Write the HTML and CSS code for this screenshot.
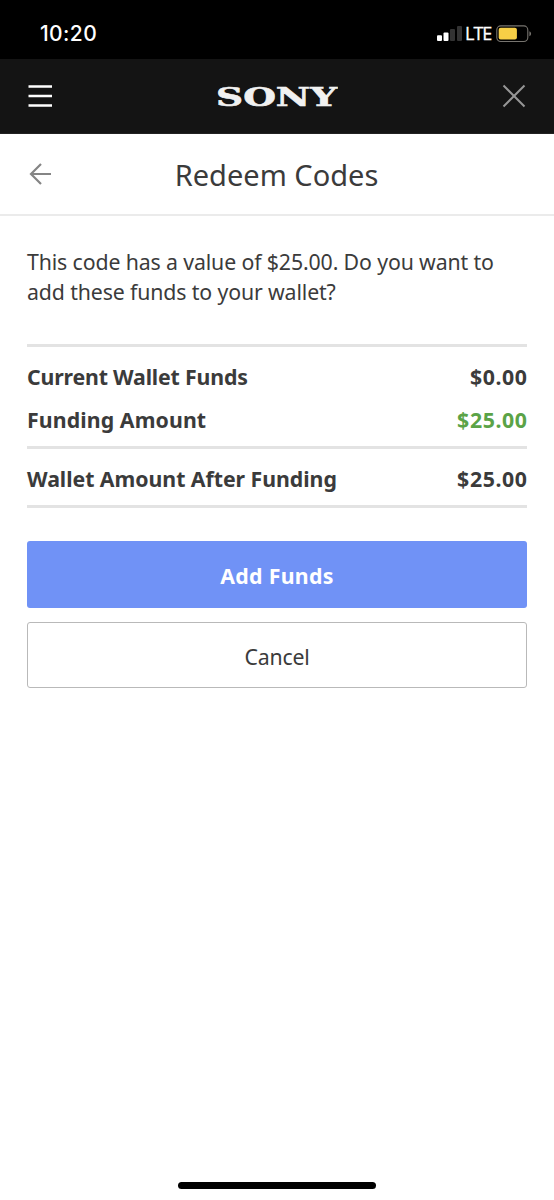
FILE: index.html
```html
<!DOCTYPE html>
<html lang="en">
<head>
<meta charset="utf-8">
<title>Redeem Codes</title>
<link rel="stylesheet" href="styles.css">
</head>
<body>
<div class="screen">
  <div class="status-bar">
    <span class="time">10:20</span>
    <div class="status-icons">
      <svg class="signal" width="26" height="16" viewBox="0 0 26 16">
        <rect x="0" y="9.3" width="5" height="5.7" rx="1" fill="#fff"/>
        <rect x="6.5" y="6.5" width="5" height="8.5" rx="1" fill="#fff"/>
        <rect x="13" y="3" width="5" height="12" rx="1" fill="#333"/>
        <rect x="20" y="0" width="5" height="15" rx="1" fill="#333"/>
      </svg>
      <span class="network">LTE</span>
      <svg class="battery" width="36" height="18" viewBox="0 0 36 18">
        <rect x=".8" y=".9" width="31" height="15.6" rx="4" fill="none" stroke="#77746f" stroke-width="1.1"/>
        <rect x="2.7" y="2.8" width="18.2" height="11.8" rx="2" fill="#f7cf46"/>
        <path d="M33.4 6.2c2.2.7 2.2 4.3 0 5z" fill="#77746f"/>
      </svg>
    </div>
  </div>
  <header class="brand-bar">
    <svg class="menu" width="24" height="24" viewBox="0 0 24 24"><path d="M.5 2.5H24M.5 12H24M.5 21.5H24" stroke="#fff" stroke-width="2.5"/></svg>
    <svg class="logo" width="122" height="30" viewBox="0 0 122 30"><text class="logo-text" x="0" y="24.5" textLength="121" lengthAdjust="spacingAndGlyphs">SONY</text></svg>
    <svg class="close" width="24" height="24" viewBox="0 0 24 24"><path d="M1.5 1.5L22.5 22.5M22.5 1.5L1.5 22.5" stroke="#969696" stroke-width="2"/></svg>
  </header>
  <div class="title-bar">
    <svg class="back" width="24" height="24" viewBox="0 0 24 24"><path d="M23 12H2.5M13 2L3 12L13 22" fill="none" stroke="#858585" stroke-width="2.2"/></svg>
    <h1 class="title">Redeem Codes</h1>
  </div>
  <main class="content">
    <p class="message">This code has a value of $25.00. Do you want to<br>add these funds to your wallet?</p>
    <div class="summary">
      <div class="group">
        <div class="row"><span class="current">Current Wallet Funds</span><span class="amount">$0.00</span></div>
        <div class="row"><span class="funding">Funding Amount</span><span class="amount positive">$25.00</span></div>
      </div>
      <div class="group total">
        <div class="row"><span>Wallet Amount After Funding</span><span class="amount">$25.00</span></div>
      </div>
    </div>
    <div class="actions">
      <button class="button primary">Add Funds</button>
      <button class="button secondary">Cancel</button>
    </div>
  </main>
  <div class="home-indicator"></div>
</div>
</body>
</html>
```
FILE: styles.css
```css
* { box-sizing: border-box; }
body { margin: 0; background: #fff; color: #3b3b3b; font-family: "Noto Sans", sans-serif; }
.screen { display: flex; flex-direction: column; width: 554px; height: 1200px; overflow: hidden; }
.status-bar { display: flex; justify-content: space-between; flex: none; height: 59px; padding: 20px 22px 0 40px; background: #000; color: #fff; }
.time { font: 500 21px/27px Inter, sans-serif; letter-spacing: .4px; }
.status-icons { display: flex; align-items: flex-start; }
.signal { margin-top: 6px; }
.network { margin: 0 0 0 2px; width: 31px; font: 500 18px/26px "Open Sans", sans-serif; letter-spacing: -1px; -webkit-text-stroke: .3px #fff; }
.battery { margin-top: 5px; }
.brand-bar { display: flex; justify-content: space-between; align-items: center; flex: none; height: 75px; padding: 0 28px; background: #141414; border-bottom: 1px solid #222; }
.logo { margin-left: -1px; }
.logo-text { font: 700 25.5px "DejaVu Serif", serif; fill: #f1f1f1; stroke: #f1f1f1; stroke-width: .6px; }
.title-bar { display: grid; grid-template-columns: 24px 1fr 24px; align-items: center; flex: none; height: 82px; padding: 0 28px; border-bottom: 2px solid #ebebeb; }
.title { margin: 2px 1px 0 0; text-align: center; font-size: 29px; font-weight: 400; line-height: 40px; }
.content { flex: 1; padding: 31px 27px 0; }
.message { position: relative; margin: 0; font-size: 21.3px; font-weight: 400; line-height: 29.5px; letter-spacing: -.13px; }
.summary { margin-top: 38px; }
.group { padding-top: 8px; height: 102px; border-top: 3px solid #e3e3e3; }
.total { height: 62px; border-bottom: 3px solid #e3e3e3; }
.row { display: flex; justify-content: space-between; align-items: center; height: 43px; font-size: 21.3px; font-weight: 700; letter-spacing: -.04px; }
.current { letter-spacing: -.17px; }
.funding { letter-spacing: .1px; }
.amount { letter-spacing: .6px; margin-right: -.6px; }
.positive { color: #5ba347; }
.actions { display: flex; flex-direction: column; gap: 14px; margin-top: 33px; }
.button { display: block; width: 100%; height: 67px; padding: 3px 0 0; border: 0; border-radius: 3px; font: 400 21.3px/30px "Noto Sans", sans-serif; color: #3b3b3b; }
.primary { background: #7092f6; color: #fff; font-weight: 700; letter-spacing: .3px; }
.secondary { height: 66px; background: #fff; border: 1px solid #b9b9b9; letter-spacing: -.2px; }
.home-indicator { flex: none; align-self: center; width: 198px; height: 7px; margin-bottom: 11px; border-radius: 4px; background: #000; }
```
